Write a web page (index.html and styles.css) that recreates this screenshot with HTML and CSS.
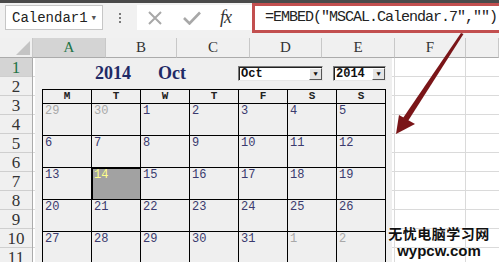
FILE: index.html
```html
<!DOCTYPE html>
<html lang="zh-CN">
<head>
    <meta charset="UTF-8">
    <meta name="viewport" content="width=device-width, initial-scale=1.0">
    <title>Calendar1</title>
    <link rel="stylesheet" href="styles.css">
</head>
<body>

<div class="topstrip"></div>

<div class="fbar">
    <div class="namebox"><span>Calendar1</span><span class="caret">&#9662;</span></div>
    <div class="grip"><span></span></div>
    <div class="fxbox">
        <svg class="ico-x" width="16" height="16" viewBox="0 0 16 16"><path d="M2 2 L14 14 M14 2 L2 14" stroke="#a8a8a8" stroke-width="2" fill="none"/></svg>
        <svg class="ico-ok" width="18" height="14" viewBox="0 0 18 14"><path d="M1 7 L6.5 12.5 L17 1.5" stroke="#a8a8a8" stroke-width="2.6" fill="none"/></svg>
        <span class="fx">fx</span>
    </div>
    <div class="formula">=EMBED("MSCAL.Calendar.7","")</div>
</div>

<div class="sheet">
    <div class="corner"><svg width="33" height="20" viewBox="0 0 33 20"><polygon points="30,3 30,17 16,17" fill="#c4c4c4"/></svg></div>
    <div class="colhead sel">A</div>
    <div class="colhead">B</div>
    <div class="colhead">C</div>
    <div class="colhead">D</div>
    <div class="colhead">E</div>
    <div class="colhead">F</div>
    <div class="colhead last"></div>

    <div class="rowheads">
        <div class="rh sel">1</div>
        <div class="rh">2</div>
        <div class="rh">3</div>
        <div class="rh">4</div>
        <div class="rh">5</div>
        <div class="rh">6</div>
        <div class="rh">7</div>
        <div class="rh">8</div>
        <div class="rh">9</div>
        <div class="rh">10</div>
        <div class="rh">11</div>
    </div>
    <div class="col"></div>
    <div class="col"></div>
    <div class="col"></div>
    <div class="col"></div>
    <div class="col"></div>
    <div class="col"></div>
    <div class="col last"></div>

    <!-- calendar control sits on top of the cells -->
    <div class="calendar">
        <div class="cal-head">
            <div class="cal-title"><span>2014</span><span class="mon">Oct</span></div>
            <div class="dd month"><span>Oct</span><span class="dd-btn">&#9660;</span></div>
            <div class="dd year"><span>2014</span><span class="dd-btn">&#9660;</span></div>
        </div>
        <div class="cal-grid">
            <div class="dow">M</div><div class="dow">T</div><div class="dow">W</div><div class="dow">T</div><div class="dow">F</div><div class="dow">S</div><div class="dow">S</div>

            <div class="day other">29</div><div class="day other">30</div><div class="day">1</div><div class="day">2</div><div class="day">3</div><div class="day">4</div><div class="day">5</div>
            <div class="day">6</div><div class="day">7</div><div class="day">8</div><div class="day">9</div><div class="day">10</div><div class="day">11</div><div class="day">12</div>
            <div class="day">13</div><div class="day today">14</div><div class="day">15</div><div class="day">16</div><div class="day">17</div><div class="day">18</div><div class="day">19</div>
            <div class="day">20</div><div class="day">21</div><div class="day">22</div><div class="day">23</div><div class="day">24</div><div class="day">25</div><div class="day">26</div>
            <div class="day">27</div><div class="day">28</div><div class="day">29</div><div class="day">30</div><div class="day">31</div><div class="day other">1</div><div class="day other">2</div>
        </div>
    </div>
</div>

<svg class="arrow" width="499" height="262" viewBox="0 0 499 262">
    <polygon points="461,33 463.5,34 408,121 403,118" fill="#7a1518"/>
    <polygon points="396,134 399,115 415,124" fill="#7a1518"/>
</svg>

<div class="watermark">
    <div class="wm-cn">无忧电脑学习网</div>
    <div class="wm-en">wypcw.com</div>
</div>

</body>
</html>
```

FILE: styles.css
```css
body {
    margin: 0;
    width: 499px;
    height: 262px;
    overflow: hidden;
    position: relative;
    background: #fff;
    font-family: "Liberation Sans", Arial, sans-serif;
    color: #222;
}
.topstrip {
    height: 3px;
    background: #4a4a4a;
}

/* formula bar */
.fbar {
    height: 35px;
    box-sizing: border-box;
    padding-top: 2px;
    display: flex;
    align-items: flex-start;
    background: #f1f1f1;
}
.namebox {
    margin-left: 5px;
    width: 98px;
    height: 25px;
    box-sizing: border-box;
    border: 1px solid #c6c6c6;
    background: #fff;
    display: flex;
    align-items: center;
    padding-left: 6px;
    font: 14px "Liberation Mono", monospace;
    color: #222;
}
.caret {
    margin-left: auto;
    margin-right: 5px;
    font-size: 11px;
    color: #555;
}
.grip {
    width: 34px;
    height: 25px;
    display: flex;
    align-items: center;
    justify-content: center;
}
.grip span {
    width: 0;
    height: 10px;
    border-left: 2px dotted #7a7a7a;
}
.fxbox {
    width: 115px;
    height: 25px;
    background: #fff;
    display: flex;
    align-items: center;
    padding-left: 10px;
    box-sizing: border-box;
}
.ico-ok {
    margin-left: 20px;
}
.fx {
    margin-left: 19px;
    font: italic 18px "Liberation Serif", serif;
    color: #333;
    letter-spacing: -1px;
}
.formula {
    flex: 1;
    margin-top: -2px;
    height: 30px;
    box-sizing: border-box;
    border: 3px solid #c24f4f;
    border-right: none;
    background: #fff;
    padding-left: 10px;
    font: 15px "Liberation Mono", monospace;
    letter-spacing: -1px;
    line-height: 24px;
    white-space: nowrap;
    overflow: hidden;
    color: #222;
}

/* sheet */
.sheet {
    position: relative;
    display: grid;
    grid-template-columns: 33px 73px 71px 73px 72px 73px 71px 1fr;
    grid-template-rows: 20px 1fr;
    height: 224px;
}
.corner {
    background: #f0f0f0;
    border-right: 1px solid #c8c8c8;
    border-bottom: 1px solid #ababab;
    box-sizing: border-box;
}
.corner svg {
    display: block;
}
.colhead {
    background: #f0f0f0;
    border-right: 1px solid #c8c8c8;
    border-bottom: 1px solid #ababab;
    box-sizing: border-box;
    text-align: center;
    font: 15px "Liberation Serif", serif;
    line-height: 19px;
    color: #333;
}
.colhead.sel {
    background: #d4d4d4;
    color: #217346;
}
.rowheads {
    background: #f0f0f0;
    border-right: 1px solid #ababab;
    overflow: hidden;
}
.rh {
    height: 19px;
    box-sizing: border-box;
    border-bottom: 1px solid #cfcfcf;
    text-align: center;
    font: 17px "Liberation Serif", serif;
    line-height: 19px;
    color: #333;
}
.rh.sel {
    background: #d4d4d4;
    color: #217346;
}
.col {
    border-right: 1px solid #dadada;
    background: repeating-linear-gradient(to bottom, #fff 0, #fff 18px, #dadada 18px, #dadada 19px);
}
.col.last {
    border-right: none;
}

/* calendar control */
.calendar {
    position: absolute;
    top: 20px;
    left: 35px;
    width: 357px;
    height: 210px;
    background: #efefef;
}
.cal-head {
    height: 31px;
    display: flex;
    align-items: flex-start;
    padding-left: 60px;
}
.cal-title {
    width: 143px;
    padding-top: 5px;
    font: bold 18px "Liberation Serif", serif;
    color: #1f2a66;
}
.cal-title .mon {
    margin-left: 27px;
}
.dd {
    margin-top: 8px;
    height: 15px;
    box-sizing: border-box;
    border: 1px solid #7a7a7a;
    border-right-color: #e6e6e6;
    border-bottom-color: #e6e6e6;
    box-shadow: inset 1px 1px 0 #222;
    background: #fff;
    display: flex;
    align-items: center;
    padding-left: 2px;
    font: bold 12px "Liberation Mono", monospace;
    color: #111;
}
.dd.month {
    width: 85px;
}
.dd.year {
    width: 53px;
    margin-left: 10px;
}
.dd-btn {
    margin-left: auto;
    width: 13px;
    height: 12px;
    box-sizing: border-box;
    border: 1px solid #fff;
    border-right-color: #555;
    border-bottom-color: #555;
    background: #e4e4e4;
    font-size: 7px;
    line-height: 10px;
    text-align: center;
    color: #111;
}
.cal-grid {
    margin-left: 7px;
    width: max-content;
    display: grid;
    grid-template-columns: repeat(7, 48px);
    grid-template-rows: 13px repeat(5, 31px);
    gap: 1px;
    background: #000;
    border: 1px solid #000;
}
.dow {
    background: #efefef;
    text-align: center;
    font: bold 11px "Liberation Mono", monospace;
    line-height: 13px;
    color: #222;
}
.day {
    background: #efefef;
    padding-left: 2px;
    font: 12px "Liberation Mono", monospace;
    line-height: 14px;
    color: #3a3a6e;
}
.day.other {
    color: #a8a8a8;
}
.day.today {
    background: #a2a2a2;
    color: #ffff8a;
    box-shadow: inset 1px 1px 0 #000;
}

/* annotations */
.arrow {
    position: absolute;
    top: 0;
    left: 0;
    pointer-events: none;
}
.watermark {
    position: absolute;
    left: 388px;
    top: 224px;
    width: 102px;
    text-align: center;
    color: #111;
    text-shadow: 0 0 2px #fff, 0 0 2px #fff;
}
.wm-cn {
    font: bold 14px "Noto Sans CJK SC", sans-serif;
    line-height: 18px;
    letter-spacing: 0.5px;
}
.wm-en {
    margin-top: 1px;
    font: bold 15px "Liberation Sans", Arial, sans-serif;
    line-height: 16px;
}
```
